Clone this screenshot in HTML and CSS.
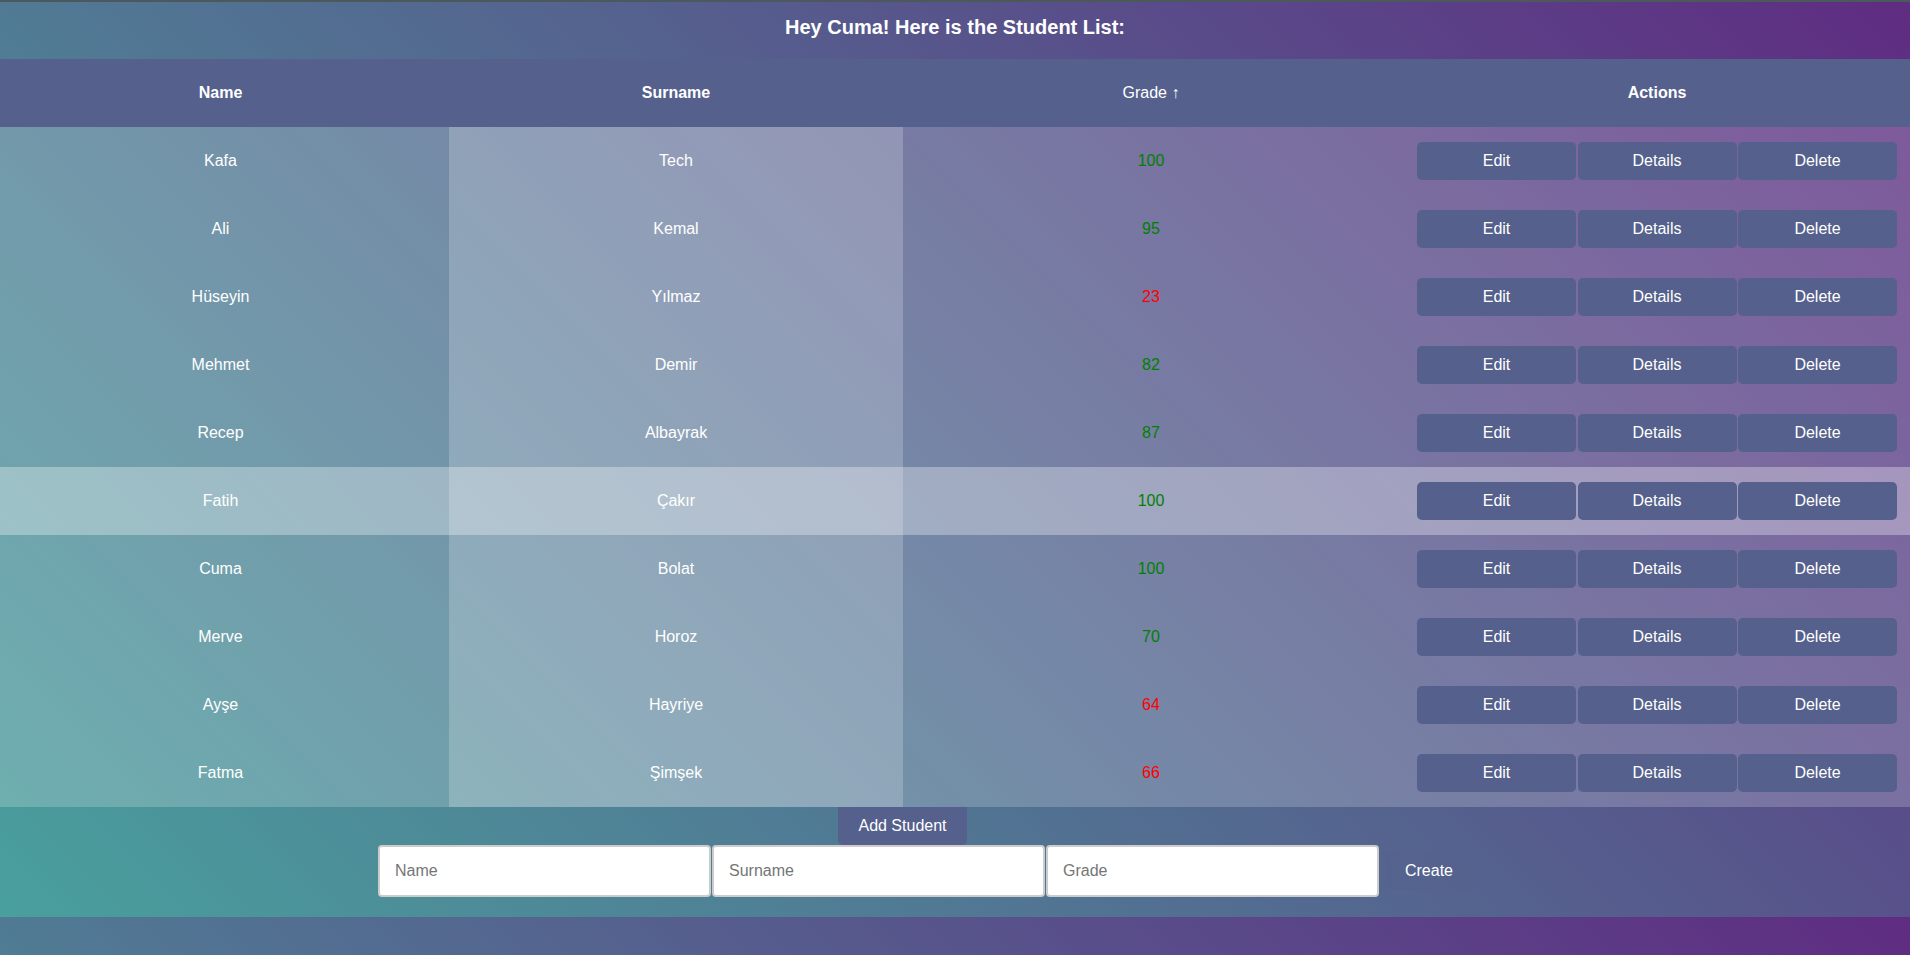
FILE: index.html
```html
<!DOCTYPE html>
<html lang="en">
<head>
<meta charset="utf-8">
<title>Student List</title>
<link rel="stylesheet" href="styles.css">
</head>
<body>
<div class="page">
  <h1 class="title">Hey Cuma! Here is the Student List:</h1>
  <table class="students">
    <colgroup>
      <col class="col-name">
      <col class="col-surname">
      <col class="col-grade">
      <col class="col-actions">
    </colgroup>
    <thead>
      <tr>
        <th class="name-cell">Name</th>
        <th>Surname</th>
        <th class="sortable">Grade ↑</th>
        <th class="actions-cell">Actions</th>
      </tr>
    </thead>
    <tbody>
      <tr>
        <td class="name-cell">Kafa</td><td>Tech</td><td class="grade pass">100</td>
        <td class="actions-cell"><div class="actions"><button class="btn">Edit</button><button class="btn">Details</button><button class="btn">Delete</button></div></td>
      </tr>
      <tr>
        <td class="name-cell">Ali</td><td>Kemal</td><td class="grade pass">95</td>
        <td class="actions-cell"><div class="actions"><button class="btn">Edit</button><button class="btn">Details</button><button class="btn">Delete</button></div></td>
      </tr>
      <tr>
        <td class="name-cell">Hüseyin</td><td>Yılmaz</td><td class="grade fail">23</td>
        <td class="actions-cell"><div class="actions"><button class="btn">Edit</button><button class="btn">Details</button><button class="btn">Delete</button></div></td>
      </tr>
      <tr>
        <td class="name-cell">Mehmet</td><td>Demir</td><td class="grade pass">82</td>
        <td class="actions-cell"><div class="actions"><button class="btn">Edit</button><button class="btn">Details</button><button class="btn">Delete</button></div></td>
      </tr>
      <tr>
        <td class="name-cell">Recep</td><td>Albayrak</td><td class="grade pass">87</td>
        <td class="actions-cell"><div class="actions"><button class="btn">Edit</button><button class="btn">Details</button><button class="btn">Delete</button></div></td>
      </tr>
      <tr class="is-hovered">
        <td class="name-cell">Fatih</td><td>Çakır</td><td class="grade pass">100</td>
        <td class="actions-cell"><div class="actions"><button class="btn">Edit</button><button class="btn">Details</button><button class="btn">Delete</button></div></td>
      </tr>
      <tr>
        <td class="name-cell">Cuma</td><td>Bolat</td><td class="grade pass">100</td>
        <td class="actions-cell"><div class="actions"><button class="btn">Edit</button><button class="btn">Details</button><button class="btn">Delete</button></div></td>
      </tr>
      <tr>
        <td class="name-cell">Merve</td><td>Horoz</td><td class="grade pass">70</td>
        <td class="actions-cell"><div class="actions"><button class="btn">Edit</button><button class="btn">Details</button><button class="btn">Delete</button></div></td>
      </tr>
      <tr>
        <td class="name-cell">Ayşe</td><td>Hayriye</td><td class="grade fail">64</td>
        <td class="actions-cell"><div class="actions"><button class="btn">Edit</button><button class="btn">Details</button><button class="btn">Delete</button></div></td>
      </tr>
      <tr>
        <td class="name-cell">Fatma</td><td>Şimşek</td><td class="grade fail">66</td>
        <td class="actions-cell"><div class="actions"><button class="btn">Edit</button><button class="btn">Details</button><button class="btn">Delete</button></div></td>
      </tr>
    </tbody>
  </table>
  <div class="add-section">
    <button class="btn add-btn">Add Student</button>
    <form class="add-form">
      <input class="field" type="text" placeholder="Name">
      <input class="field" type="text" placeholder="Surname">
      <input class="field" type="text" placeholder="Grade">
      <button class="btn create-btn" type="button">Create</button>
    </form>
  </div>
</div>
</body>
</html>
```

FILE: styles.css
```css
body {
  margin: 0;
  font-family: "Liberation Sans", Arial, sans-serif;
  font-size: 16px;
  color: #ffffff;
  background: linear-gradient(45deg, #49a09d, #5f2c82);
}

.page {
  border-top: 2px solid #4b595d;
}

.title {
  margin: 14px 0 20px;
  font-size: 20px;
  line-height: 23px;
  font-weight: bold;
  text-align: center;
}

.students {
  width: 100%;
  border-collapse: collapse;
  table-layout: fixed;
}

.col-name { width: 449px; }
.col-surname { width: 454px; }
.col-grade { width: 496px; }

.students th {
  background: #55608c;
  padding: 25px 15px;
  line-height: 18px;
  font-size: 16px;
  font-weight: bold;
  text-align: center;
}

.students th.sortable {
  font-weight: normal;
}

.students tbody tr {
  background: rgba(255, 255, 255, 0.2);
}

.students tbody tr:hover,
.students tbody tr.is-hovered {
  background: rgba(255, 255, 255, 0.45);
}

.students td {
  padding: 15px;
  line-height: 18px;
  text-align: center;
  vertical-align: middle;
}

.students td:nth-child(2) {
  background: rgba(255, 255, 255, 0.2);
}

.students .name-cell {
  padding-left: 11px;
  padding-right: 19px;
}

.grade.pass { color: #008000; }
.grade.fail { color: #ff0000; }

.students .actions-cell {
  padding-left: 18px;
  padding-right: 13px;
}

.actions {
  display: flex;
  gap: 1.5px;
}

.actions .btn {
  flex: 1;
}

.btn {
  background: #55608c;
  color: #ffffff;
  border: none;
  border-radius: 5px;
  padding: 10px 20px;
  font-family: "Liberation Sans", Arial, sans-serif;
  font-size: 16px;
  line-height: 18px;
  cursor: pointer;
}

.add-section {
  display: flex;
  flex-direction: column;
  align-items: center;
  padding-bottom: 20px;
}

.add-btn {
  margin-right: 105px;
  border-radius: 0 0 5px 5px;
}

.add-form {
  display: flex;
  align-items: center;
  margin: 0 59px 0 0;
}

.field {
  box-sizing: border-box;
  width: 333px;
  height: 52px;
  margin-right: 1px;
  padding: 0 15px;
  border: 2px solid #cccccc;
  border-radius: 4px;
  background: #ffffff;
  font-family: "Liberation Sans", Arial, sans-serif;
  font-size: 16px;
  color: #333333;
}

.field::placeholder {
  color: #757575;
}

.create-btn {
  margin-left: 5px;
  background: rgba(85, 96, 140, 0.35);
}
```
